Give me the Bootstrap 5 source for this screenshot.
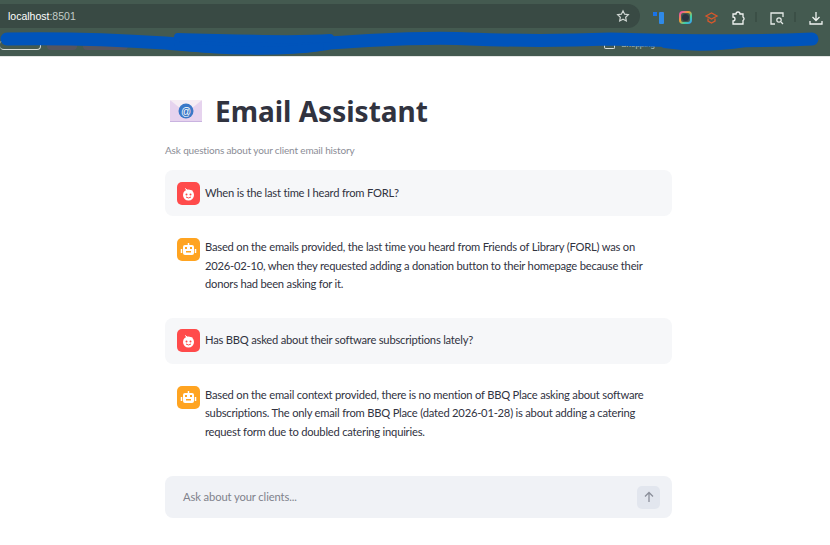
<!DOCTYPE html>
<html lang="en">
<head>
  <meta charset="UTF-8">
  <title>Email Assistant</title>
  <link href="https://cdn.jsdelivr.net/npm/bootstrap@5.3.0/dist/css/bootstrap.min.css" rel="stylesheet">
  <style>
    body { background: #fff; color: #31333f; font-family: Lato, sans-serif; overflow: hidden; }
    .browser-bar { height: 57px; background: #445a50; position: relative; padding-top: 4px; border-bottom: 1px solid #e4e6e4; }
    .url-row { height: 24px; width: 640px; background: #394a44; border-radius: 0 12px 12px 0; padding: 0 10px 0 8px; color: #c4ccc8; font: 10.5px "Liberation Sans", sans-serif; }
    .url-row b { font-weight: 400; color: #fff; }
    .tool-icons { position: absolute; top: 4px; right: 0; }
    .bookmarks { height: 28px; padding-top: 12px; gap: 6px; color: #b9c4be; font: 8px/10px "Liberation Sans", sans-serif; }
    .bm-pill { height: 10px; border-radius: 4px; background: #55555f; }
    .bm-first { width: 41px; background: none; border: 1px solid #d8dcd9; border-left: 0; }
    .bm-icon { width: 11px; height: 9px; border: 1px solid #d8dcd9; border-top: 0; border-radius: 0 0 2px 2px; margin-left: auto; }
    .scribble { position: absolute; left: 0; top: 29px; }
    .page-col { width: 507px; margin-left: 165px; }
    .title-row { margin-top: 34px; height: 40px; padding-left: 5px; gap: 13px; }
    .app-title { font-family: "Noto Sans", sans-serif; font-size: 28px; font-weight: 700; line-height: 40px; margin: 0; }
    .app-sub { font-size: 10px; letter-spacing: -.15px; color: #8b8d96; margin: 12px 0 13px; line-height: 14px; }
    .msg { padding: 11px 12px; border-radius: 8px; gap: 5px; font-size: 11.2px; letter-spacing: -.22px; line-height: 18.5px; margin-bottom: 12px; }
    .msg-user { background: #f6f7f9; height: 46px; align-items: center; }
    .msg-bot { padding-top: 10px; padding-bottom: 12px; }
    .avatar { width: 23px; height: 23px; flex: none; border-radius: 5px; }
    .avatar-user { background: #ff4b4b; }
    .avatar-bot { background: #ffa421; }
    .ask-box { height: 42px; background: #f0f2f6; border-radius: 8px; margin-top: 23px; padding: 0 12px 0 18px; color: #80828c; font-size: 11.2px; letter-spacing: -.1px; }
    .send-btn { width: 23px; height: 23px; background: #e2e6ee; border-radius: 5px; }
  </style>
</head>
<body>
  <div class="browser-bar">
    <div class="url-row d-flex align-items-center justify-content-between">
      <span><b>localhost</b>:8501</span>
      <svg width="14" height="14" viewBox="0 0 24 24" fill="none" stroke="#cfd6d2" stroke-width="2"><path d="M12 3l2.800 5.900 6.400.8-4.700 4.400 1.200 6.400L12 17.400l-5.700 3.100 1.200-6.400L2.800 9.700l6.400-.8z"/></svg>
    </div>
    <div class="tool-icons">
      <svg width="180" height="24" viewBox="0 0 180 24" fill="none">
        <defs><linearGradient id="ring" x1="0" y1="0" x2="1" y2="1"><stop offset="0" stop-color="#e84bb0"/><stop offset=".4" stop-color="#f0a030"/><stop offset=".7" stop-color="#40d0a0"/><stop offset="1" stop-color="#3aa0f0"/></linearGradient></defs>
        <rect x="3" y="6" width="4" height="4" fill="#1a73e8"/><rect x="9" y="6" width="5" height="12" rx="1" fill="#2f8ae8"/>
        <rect x="30" y="6" width="11" height="11" rx="3" stroke="url(#ring)" stroke-width="2"/><circle cx="35.500" cy="11.500" r="3.500" fill="#2b3440"/>
        <path d="M56 10l5.500-3 5.500 3-5.500 3zM58 12.500v2.500l3.500 2 3.500-2v-2.500" stroke="#d9582b" stroke-width="1.300"/>
        <path d="M83 8h3a2 2 0 0 1 4 0h3v3a2 2 0 0 1 0 3.500V18H83v-3a2 2 0 0 0 0-4z" stroke="#f0f3f1" stroke-width="1.300"/>
        <path d="M106 6v10M145 6v10" stroke="#33443d"/>
        <path d="M125 18h-4V7h12v4" stroke="#e6ebe8" stroke-width="1.300"/><circle cx="129" cy="14" r="2.200" stroke="#e6ebe8" stroke-width="1.200"/><path d="M131 16l2 2" stroke="#e6ebe8" stroke-width="1.200"/>
        <path d="M166 6v8M162.500 11l3.500 3.500 3.500-3.500M160 15v3h12v-3" stroke="#f0f3f1" stroke-width="1.300"/>
      </svg>
    </div>
    <div class="bookmarks d-flex">
      <span class="bm-pill bm-first"></span>
      <span class="bm-pill" style="width:30px"></span>
      <span class="bm-pill" style="width:45px"></span>
      <span class="bm-icon"></span>
      <span style="margin-right:175px">Shopping</span>
    </div>
    <svg class="scribble" width="830" height="28" viewBox="0 0 830 28" fill="none">
      <path d="M7 10C60 9 120 11 165 14C240 21 300 19 330 14C380 10 440 8 470 10C520 12 560 12 610 10C660 11 720 14 812 10" stroke="#0054bb" stroke-width="13" stroke-linecap="round"/>
      <path d="M178 8C230 9 290 12 330 9M178 17C220 22 280 24 320 18M665 15C690 19 720 18 745 14" stroke="#0054bb" stroke-width="8" stroke-linecap="round"/>
    </svg>
  </div>

  <main class="page-col">
    <div class="title-row d-flex align-items-center">
      <svg width="32" height="22" viewBox="0 0 32 22"><rect width="32" height="22" rx="1" fill="#e6d3ee"/><path d="M0 0l16 13L32 0z" fill="#f6edf4"/><path d="M0 21h32v1H0z" fill="#c9b3e0"/><circle cx="16" cy="11" r="7.500" fill="#3a78c8"/><text x="16" y="14.500" font-size="10" fill="#fff" text-anchor="middle" font-family="Liberation Sans">@</text></svg>
      <h1 class="app-title">Email Assistant</h1>
    </div>
    <p class="app-sub">Ask questions about your client email history</p>

    <div class="msg msg-user d-flex">
      <svg class="avatar avatar-user" viewBox="0 0 23 23"><path d="M8 6.500q3.500 2 3.500 3M11.500 9.500q2-1 4-.5" stroke="#fff" fill="none"/><circle cx="11.500" cy="13" r="5.500" fill="#fff"/><circle cx="9.500" cy="12.500" r="1" fill="#ff4b4b"/><circle cx="13.500" cy="12.500" r="1" fill="#ff4b4b"/><path d="M9 15q2.500 2 5 0" stroke="#ff4b4b" fill="none"/></svg>
      <span>When is the last time I heard from FORL?</span>
    </div>
    <div class="msg msg-bot d-flex">
      <svg class="avatar avatar-bot" viewBox="0 0 23 23"><path d="M11.500 5v2M4.500 11v4M18.500 11v4" stroke="#fff" stroke-width="1.500"/><rect x="6" y="7" width="11" height="10" rx="2" fill="#fff"/><rect x="8" y="9" width="2" height="2" fill="#ffa421"/><rect x="13" y="9" width="2" height="2" fill="#ffa421"/><rect x="9" y="13" width="5" height="1.500" fill="#ffa421"/></svg>
      <span>Based on the emails provided, the last time you heard from Friends of Library (FORL) was on 2026-02-10, when they requested adding a donation button to their homepage because their donors had been asking for it.</span>
    </div>
    <div class="msg msg-user d-flex">
      <svg class="avatar avatar-user" viewBox="0 0 23 23"><path d="M8 6.500q3.500 2 3.500 3M11.500 9.500q2-1 4-.5" stroke="#fff" fill="none"/><circle cx="11.500" cy="13" r="5.500" fill="#fff"/><circle cx="9.500" cy="12.500" r="1" fill="#ff4b4b"/><circle cx="13.500" cy="12.500" r="1" fill="#ff4b4b"/><path d="M9 15q2.500 2 5 0" stroke="#ff4b4b" fill="none"/></svg>
      <span>Has BBQ asked about their software subscriptions lately?</span>
    </div>
    <div class="msg msg-bot d-flex">
      <svg class="avatar avatar-bot" viewBox="0 0 23 23"><path d="M11.500 5v2M4.500 11v4M18.500 11v4" stroke="#fff" stroke-width="1.500"/><rect x="6" y="7" width="11" height="10" rx="2" fill="#fff"/><rect x="8" y="9" width="2" height="2" fill="#ffa421"/><rect x="13" y="9" width="2" height="2" fill="#ffa421"/><rect x="9" y="13" width="5" height="1.500" fill="#ffa421"/></svg>
      <span>Based on the email context provided, there is no mention of BBQ Place asking about software subscriptions. The only email from BBQ Place (dated 2026-01-28) is about adding a catering request form due to doubled catering inquiries.</span>
    </div>
    <div class="ask-box d-flex align-items-center justify-content-between">
      <span>Ask about your clients...</span>
      <div class="send-btn d-flex align-items-center justify-content-center">
        <svg width="12" height="12" viewBox="0 0 12 12" fill="none" stroke="#8b8f9a" stroke-width="1.300"><path d="M6 11V1.500M2 5.500l4-4 4 4"/></svg>
      </div>
    </div>
  </main>
</body>
</html>
